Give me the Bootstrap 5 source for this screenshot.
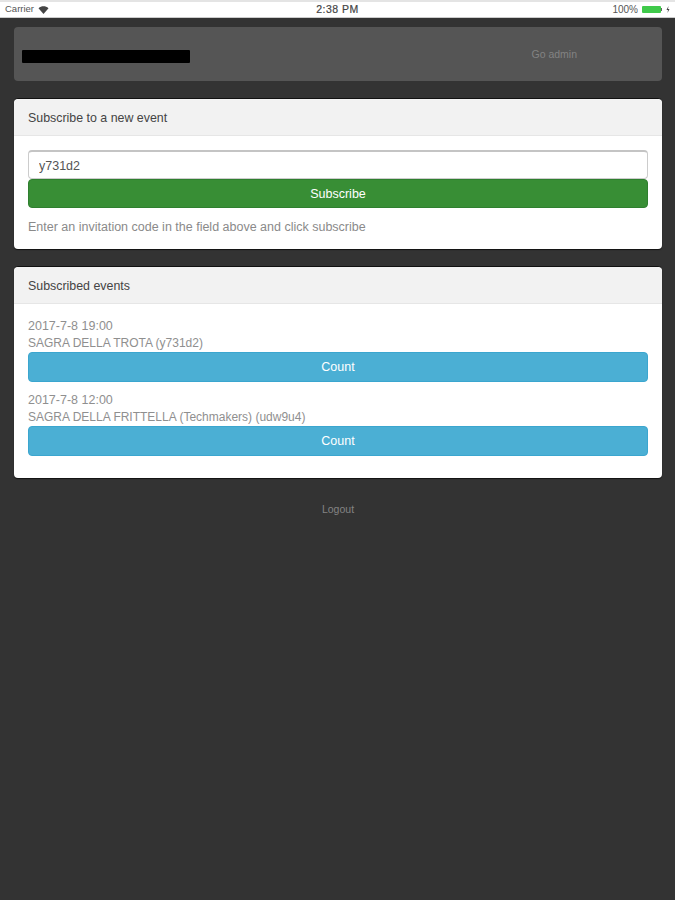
<!DOCTYPE html>
<html lang="en">
<head>
  <meta charset="UTF-8" />
  <meta name="viewport" content="width=device-width, initial-scale=1.0"/>
  <title>Events</title>
  <link href="https://cdn.jsdelivr.net/npm/bootstrap@5.3.0/dist/css/bootstrap.min.css" rel="stylesheet">
  <style>
    body { background: #333; font-family: "Liberation Sans", Arial, sans-serif; font-size: 12px; color: #777; min-height: 900px; }
    .status-bar { height: 18px; background: #fff; border-top: 2px solid #e4e4e4; border-bottom: 1px solid #ccc; padding: 0 5px; font-size: 9.5px; color: #555; }
    .status-side { width: 110px; }
    .status-time { color: #444; font-size: 10.5px; letter-spacing: 0.5px; -webkit-text-stroke: 0.2px #444; }
    .status-pct { font-size: 10px; }
    .batt { width: 19px; height: 7px; background: #3fc94a; border-radius: 1px; }
    .batt-tip { width: 1px; height: 3px; background: #666; }
    .page-wrap { padding: 9px 13px 0 14px; }
    .top-bar { height: 54px; background: #555; border-radius: 4px; padding: 0 8px; margin-bottom: 17px; }
    .black-bar { width: 168px; height: 13px; background: #000; border-radius: 1px; margin-top: 4px; }
    .admin-link { color: #838383; font-size: 10.5px; text-decoration: none; margin: 1px 77px 0 0; }
    .panel { border: 0; border-top: 1px solid #111; border-radius: 4px; box-shadow: 0 1px 1px #111; margin-bottom: 17px; }
    .panel .card-header { height: 37px; padding: 0 14px; background: #f2f2f2; border-bottom: 1px solid #e6e6e6; color: #444; font-size: 12.4px; line-height: 38px; }
    .panel .card-body { padding: 14px; }
    .code-input { height: 29px; padding: 1px 10px 0; font-size: 12.500px; color: #555; border: 1px solid #ccc; border-top: 2px solid #c4c4c4; border-radius: 4px; }
    .action-btn { padding: 0; font-size: 12.5px; color: #fff; border-radius: 4px; }
    .btn-sub, .btn-sub:hover { height: 29px; padding-top: 2px; background: #388e35; border: 1px solid #2f7f2f; color: #fff; }
    .btn-count, .btn-count:hover { height: 30px; background: #4bafd4; border: 1px solid #3ba6cf; color: #fff; }
    .help-text { color: #8a8a8a; font-size: 12.5px; margin-top: 12px; line-height: 15px; }
    .event-date { color: #8f8f8f; font-size: 12.5px; line-height: 17.5px; padding-top: 1px; margin-bottom: -1px; }
    .event-line { color: #8f8f8f; font-size: 12px; line-height: 17.5px; }
    .event-item { margin-bottom: 9px; }
    .events-body { padding-top: 13px !important; padding-bottom: 13px !important; }
    .logout-row { padding-top: 5px; }
    .logout-link { color: #838383; font-size: 10.5px; text-decoration: none; }
  </style>
</head>
<body>
  <div class="status-bar d-flex align-items-center justify-content-between">
    <div class="status-side d-flex align-items-center gap-1">
      <span>Carrier</span>
      <svg width="11" height="8" viewBox="0 0 11 8"><path d="M0.5 2.2C3.5-0.4 7.500-0.4 10.500 2.200L5.500 8Z" fill="#444"/></svg>
    </div>
    <div class="status-time">2:38 PM</div>
    <div class="status-side d-flex align-items-center justify-content-end">
      <span class="status-pct me-1">100%</span>
      <span class="batt"></span><span class="batt-tip me-1"></span>
      <svg width="4" height="7" viewBox="0 0 4 7"><path d="M2.500 0L0.500 4H2L1.500 7L3.500 3H2Z" fill="#444"/></svg>
    </div>
  </div>

  <div class="page-wrap">
    <div class="top-bar d-flex align-items-center justify-content-between">
      <div class="black-bar"></div>
      <a class="admin-link" href="#">Go admin</a>
    </div>

    <div class="card panel">
      <div class="card-header">Subscribe to a new event</div>
      <div class="card-body">
        <input class="form-control code-input" type="text" value="y731d2">
        <button class="btn action-btn btn-sub w-100 d-block">Subscribe</button>
        <div class="help-text">Enter an invitation code in the field above and click subscribe</div>
      </div>
    </div>

    <div class="card panel">
      <div class="card-header">Subscribed events</div>
      <div class="card-body events-body">
        <div class="event-item">
          <div class="event-date">2017-7-8 19:00</div>
          <div class="event-line">SAGRA DELLA TROTA (y731d2)</div>
          <button class="btn action-btn btn-count w-100">Count</button>
        </div>
        <div class="event-item">
          <div class="event-date">2017-7-8 12:00</div>
          <div class="event-line">SAGRA DELLA FRITTELLA (Techmakers) (udw9u4)</div>
          <button class="btn action-btn btn-count w-100">Count</button>
        </div>
      </div>
    </div>

    <div class="text-center logout-row"><a class="logout-link" href="#">Logout</a></div>
  </div>
  <script src="https://cdn.jsdelivr.net/npm/bootstrap@5.3.0/dist/js/bootstrap.bundle.min.js"></script>
</body>
</html>
